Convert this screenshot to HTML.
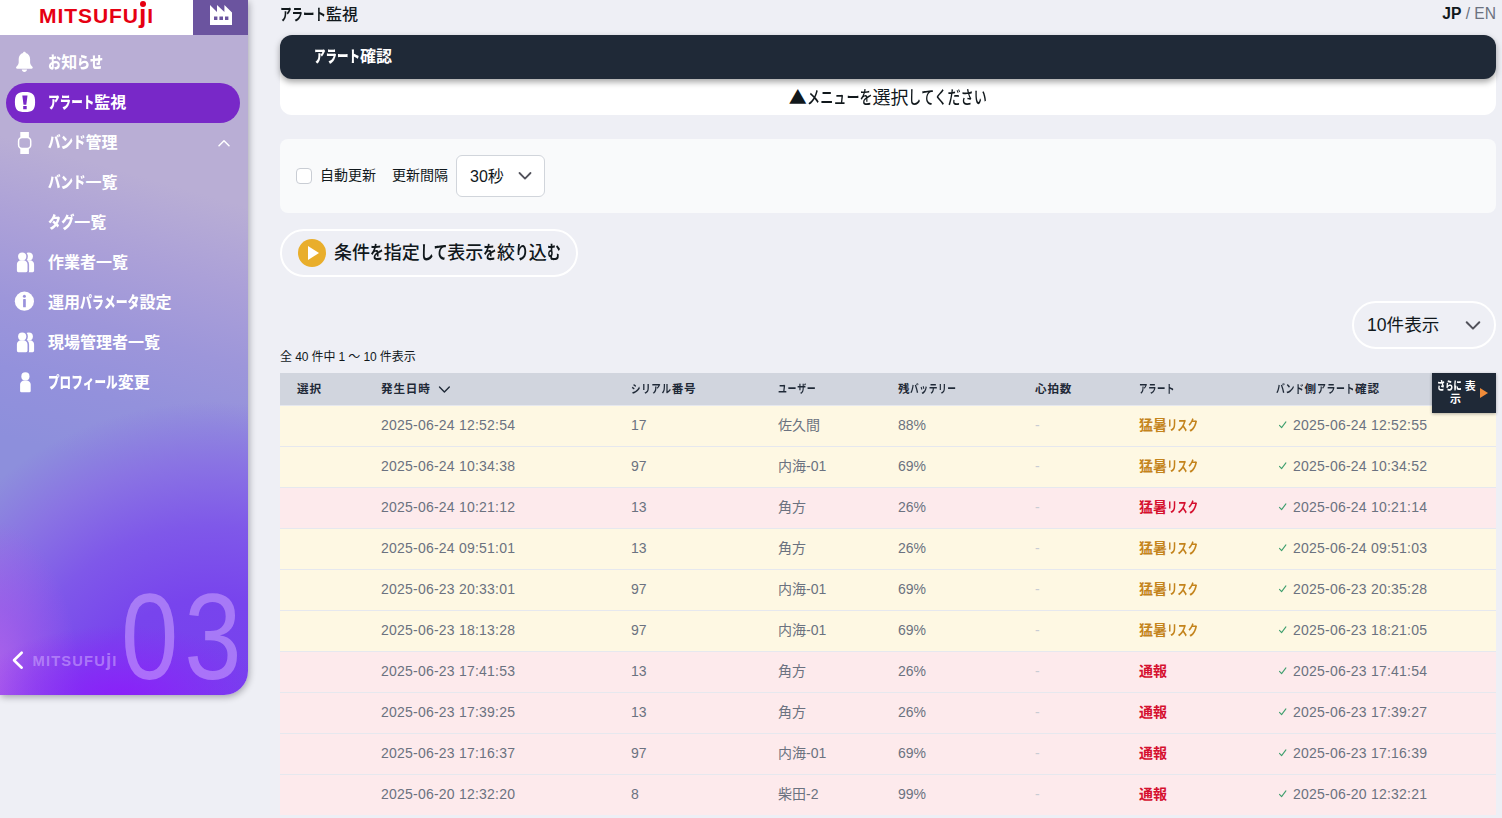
<!DOCTYPE html>
<html lang="ja">
<head>
<meta charset="utf-8">
<title>アラート監視</title>
<style>
*{box-sizing:border-box;margin:0;padding:0}
html,body{width:1502px;height:818px;overflow:hidden}
body{background:#eeeff5;font-family:"Liberation Sans","Noto Sans CJK JP",sans-serif;color:#11181c;position:relative}
.abs{position:absolute}
.k{display:inline-block;transform-origin:0 50%;white-space:nowrap;font-weight:500}
.nav .k,#darkbar .k,#more .k{font-weight:900}
.th .k,.c6 .k{font-weight:700}
#cond .k,#title .k{font-weight:700}
body{font-kerning:none;font-feature-settings:"kern" 0,"palt" 0,"chws" 0;text-spacing-trim:space-all}

/* ---------- sidebar ---------- */
#side{position:absolute;left:0;top:0;width:248px;height:695px;border-bottom-right-radius:24px;overflow:hidden;
  background:
   radial-gradient(ellipse 150px 75px at 120px 700px, rgba(140,28,250,.95) 0%, rgba(138,35,248,.6) 45%, rgba(135,40,245,0) 100%),
   radial-gradient(ellipse 90px 170px at -10px 690px, rgba(180,100,235,.95) 0%, rgba(170,90,235,.55) 50%, rgba(160,90,235,0) 100%),
   radial-gradient(circle 328px at 210px 730px, #7640ee 0%, #7844ed 40%, #7f58e9 62%, #8a74e3 82%, rgba(141,140,221,0) 100%),
   linear-gradient(196deg,#b9aed5 0%,#b9aed5 27%,#aba0d8 38%,#9d96da 48%,#9391dc 57%,#8d8fdc 66%,#8d8fdc 100%);
  box-shadow:none}
#sideshadow{position:absolute;left:0;top:0;width:248px;height:695px;border-bottom-right-radius:24px;box-shadow:1px 2px 7px rgba(0,0,20,.32)}
#logo{position:absolute;left:0;top:0;width:193px;height:35px;background:#fff}
#logo>span{position:absolute;left:39px;top:1.800px;font-weight:bold;font-size:21px;line-height:28px;color:#e60012;letter-spacing:.95px;white-space:nowrap}
.lj{font-size:1.270em;line-height:0}
#logo i{position:absolute;left:139.900px;top:.9px;width:6.200px;height:6.200px;border-radius:50%;background:#e60012}
#fact{position:absolute;left:193px;top:0;width:55px;height:35px;background:#6b549f}
.nav{position:absolute;left:0;width:248px;height:40px;color:#fff;font-weight:bold;font-size:16px;line-height:40px}
.nav .t{position:absolute;left:48px;top:1px;white-space:nowrap;transform-origin:0 50%}
.ic{position:absolute;display:block}
#pill{position:absolute;left:6px;top:83px;width:234px;height:40px;border-radius:20px;background:#7828c8}
#big{position:absolute;left:120.500px;top:576.200px;font-size:122.700px;line-height:122.700px;color:rgba(205,165,255,.55);font-family:"Liberation Sans",sans-serif;letter-spacing:7.100px;white-space:nowrap;transform-origin:0 0;transform:scaleX(.839)}
#blogo{position:absolute;left:32.600px;top:652px;font-size:14.700px;line-height:18px;font-weight:bold;color:rgba(200,160,252,.62);letter-spacing:1.150px;white-space:nowrap}

/* ---------- main ---------- */
#title{position:absolute;left:280px;top:4px;font-weight:500;font-size:16px;line-height:22px;color:#11181c;white-space:nowrap}
#lang{position:absolute;right:6px;top:3px;font-size:15.600px;line-height:22px;color:#6b7280;white-space:nowrap}
#lang b{color:#11181c}
#whitebox{position:absolute;left:280px;top:60px;width:1216px;height:55px;background:#fff;border-radius:0 0 12px 12px}
#darkbar{position:absolute;left:280px;top:35px;width:1216px;height:44px;background:#1f2937;border-radius:12px;box-shadow:0 3px 6px rgba(0,0,0,.36)}
#darkbar>span{position:absolute;left:34px;top:11px;font-size:16px;line-height:22px;font-weight:bold;color:#fff;white-space:nowrap}
#menumsg{position:absolute;left:280px;width:1216px;top:84px;text-align:center;font-family:"Noto Sans CJK JP",sans-serif;font-size:18px;line-height:24px;color:#11181c;white-space:nowrap}
#filter{position:absolute;left:280px;top:139px;width:1216px;height:74px;background:#f9fafb;border-radius:8px}
#cb{position:absolute;left:296px;top:168px;width:16px;height:16px;border:1px solid #c9cdd4;border-radius:4px;background:#fff}
.lbl{position:absolute;font-size:14px;line-height:20px;color:#11181c;white-space:nowrap}
#sel30{position:absolute;left:456px;top:155px;width:89px;height:42px;border:1px solid #d1d5db;border-radius:6px;background:#fff}
#sel30>span{position:absolute;left:13px;top:10px;font-size:16px;line-height:22px;color:#11181c;white-space:nowrap}
#cond{position:absolute;left:280px;top:229px;width:298px;height:48px;border:2px solid #fff;border-radius:24px;background:#eeeff5}
#cond .c{position:absolute;left:16px;top:8px;width:28px;height:28px;border-radius:50%;background:#e9ae2b}
#cond .c:after{content:"";position:absolute;left:10px;top:7px;border-left:11px solid #fff;border-top:7px solid transparent;border-bottom:7px solid transparent}
#cond>span{position:absolute;left:52px;top:9px;font-size:18px;line-height:26px;color:#11181c;white-space:nowrap;font-weight:500}
#sel10{position:absolute;left:1352px;top:301px;width:144px;height:48px;border:2px solid #fff;border-radius:24px;background:#eeeff5}
#sel10>span{position:absolute;left:13px;top:9px;font-size:17.600px;line-height:26px;color:#11181c;white-space:nowrap}
#count{position:absolute;left:280px;top:348px;letter-spacing:-.1px;font-size:12px;line-height:18px;color:#11181c;white-space:nowrap}

/* ---------- table ---------- */
#thead{position:absolute;left:280px;top:373px;width:1216px;height:32px;background:#d1d5de}
.th{position:absolute;top:373px;letter-spacing:.8px;font-size:11.600px;line-height:32px;font-weight:bold;color:#1f2937;white-space:nowrap}
.row{position:absolute;left:280px;width:1216px;height:41px;border-top:1px solid #e6e8ee;font-size:14px;line-height:38px;color:#6b7280}
.row.y{background:#fef8e3}
.row.p{background:#fdeaec}
.row>span{position:absolute;top:0;white-space:nowrap}
.c1{left:101px;letter-spacing:.22px}.c2{left:351px}.c3{left:498px}.c4{left:618px}.c5{left:755px;color:#c9ccd3}.c6{left:859px;font-weight:bold}.c7{left:1013px;letter-spacing:.22px}
.row svg{position:absolute;left:998px;top:14px;display:block}
.row.y .c6{color:#c4841d}
.row.p .c6{color:#d5102f}
.row .o{color:#c4841d}
#more .m1{position:absolute;left:5px;top:6px;white-space:nowrap}#more .m2{position:absolute;left:18px;top:19px}#more i{position:absolute;left:48px;top:15px;border-left:8px solid #f08c3a;border-top:5.500px solid transparent;border-bottom:5.500px solid transparent}
#more{position:absolute;left:1432px;top:373px;width:64px;height:40px;background:#1f2937;box-shadow:0 1px 3px rgba(0,0,0,.3);color:#fff;font-size:11px;line-height:14px;font-weight:bold;text-align:center}
</style>
</head>
<body>

<!-- sidebar -->
<div id="sideshadow"></div>
<div id="side">
  <div id="pill"></div>
  <div id="big">03</div>
  <div id="blogo">MITSUFU<span class="lj">j</span>I</div>
</div>
<div id="logo"><span>MITSUFU<span class="lj">ȷ</span>I</span><i></i></div>
<div id="fact"></div>

<div class="nav" style="top:42px"><span class="t"><span class="k" style="transform:scaleX(0.819);margin-right:-2.90px">お</span>知<span class="k" style="transform:scaleX(0.819);margin-right:-5.80px">らせ</span></span></div>
<div class="nav" style="top:82px"><span class="t"><span class="k" style="transform:scaleX(0.723);margin-right:-17.70px">アラート</span>監視</span></div>
<div class="nav" style="top:122px"><span class="t"><span class="k" style="transform:scaleX(0.781);margin-right:-10.50px">バンド</span>管理</span></div>
<div class="nav" style="top:162px"><span class="t"><span class="k" style="transform:scaleX(0.781);margin-right:-10.50px">バンド</span>一覧</span></div>
<div class="nav" style="top:202px"><span class="t"><span class="k" style="transform:scaleX(0.822);margin-right:-5.70px">タグ</span>一覧</span></div>
<div class="nav" style="top:242px"><span class="t">作業者一覧</span></div>
<div class="nav" style="top:282px"><span class="t">運用<span class="k" style="transform:scaleX(0.743);margin-right:-20.60px">パラメータ</span>設定</span></div>
<div class="nav" style="top:322px"><span class="t">現場管理者一覧</span></div>
<div class="nav" style="top:362px"><span class="t"><span class="k" style="transform:scaleX(0.725);margin-right:-26.40px">プロフィール</span>変更</span></div>


<!-- icons -->
<svg class="ic" style="left:210px;top:5px" width="22" height="20" viewBox="0 0 22 20"><path fill="#fff" fill-rule="evenodd" d="M0 0L7 7V0l7.4 7V0L22 7.6V20H0zM4 11.4h3.4v3.6H4zm5.4 0h3.6v3.6H9.4zm5.6 0h3.4v3.6H15z"/></svg>
<svg class="ic" style="left:15px;top:51px" width="19" height="22" viewBox="0 0 19 22"><path fill="#fff" d="M9.4.7c.8 0 1.3.5 1.4 1.3 2.6.8 4.3 3 4.300 6v3.500c0 1.500 1 2.800 2.300 4.200.8.900.3 2-.9 2H2.300c-1.200 0-1.700-1.100-.9-2 1.300-1.400 2.300-2.700 2.300-4.200V8c0-3 1.700-5.200 4.300-6 .1-.8.600-1.300 1.400-1.300zM6.700 18.600h5.400c-.3 1.400-1.300 2.300-2.700 2.300s-2.400-.9-2.700-2.300z"/></svg>
<svg class="ic" style="left:14px;top:91px" width="22" height="22" viewBox="0 0 22 22"><path fill="#fff" d="M11 .9C18.700 .9 21.100 3.300 21.100 11S18.700 21.100 11 21.100 .9 18.700 .9 11 3.300 .9 11 .9z"/><path fill="#7828c8" d="M8.300 4.400h5.200l-1.200 9.400H9.500zM9.200 15h3.500v3.200H9.200z"/></svg>
<svg class="ic" style="left:17px;top:131px" width="16" height="24" viewBox="0 0 16 24"><path fill="#fff" d="M3.300 1h8.600v5.600H3.300zM3.300 17.400h8.600V23H3.300z"/><rect x="1.600" y="6.600" width="12.100" height="10.900" rx="3.500" fill="none" stroke="#fff" stroke-width="1.500"/></svg>
<svg class="ic" style="left:218px;top:139px" width="12" height="8" viewBox="0 0 12 8"><path d="M1 6.700L6 1.700l5 5" fill="none" stroke="#fff" stroke-width="1.500" stroke-linecap="round" stroke-linejoin="round"/></svg>
<svg class="ic" style="left:16px;top:252px" width="20" height="22" viewBox="0 0 20 22"><defs><mask id="mu1" maskUnits="userSpaceOnUse" x="0" y="0" width="20" height="22"><rect width="20" height="22" fill="#fff"/><g transform="translate(.9 .2)" fill="#000" stroke="#000" stroke-width="3.2"><circle cx="5.3" cy="4.3" r="4.1"/><path d="M0 12.3a4.2 4.2 0 0 1 4.2-4.2h2.2a4.2 4.2 0 0 1 4.2 4.2v6.3a1.4 1.4 0 0 1-1.4 1.4h-7.8a1.4 1.4 0 0 1-1.4-1.4z"/></g></mask></defs><g fill="#fff"><g mask="url(#mu1)"><g transform="translate(7.5 .2)"><circle cx="5.3" cy="4.3" r="4.1"/><path d="M0 12.3a4.2 4.2 0 0 1 4.2-4.2h2.2a4.2 4.2 0 0 1 4.2 4.2v6.3a1.4 1.4 0 0 1-1.4 1.4h-7.8a1.4 1.4 0 0 1-1.4-1.4z"/></g></g><g transform="translate(.9 .2)"><circle cx="5.3" cy="4.3" r="4.1"/><path d="M0 12.3a4.2 4.2 0 0 1 4.2-4.2h2.2a4.2 4.2 0 0 1 4.2 4.2v6.3a1.4 1.4 0 0 1-1.4 1.4h-7.8a1.4 1.4 0 0 1-1.4-1.4z"/></g></g></svg>
<svg class="ic" style="left:14px;top:291px" width="21" height="21" viewBox="0 0 21 21"><circle cx="10.400" cy="10.200" r="9.600" fill="#fff"/><circle cx="10.400" cy="5.300" r="1.500" fill="#9a92dc"/><rect x="9.100" y="8" width="2.700" height="8.300" rx=".4" fill="#9a92dc"/></svg>
<svg class="ic" style="left:16px;top:332px" width="20" height="22" viewBox="0 0 20 22"><defs><mask id="mu2" maskUnits="userSpaceOnUse" x="0" y="0" width="20" height="22"><rect width="20" height="22" fill="#fff"/><g transform="translate(.9 .2)" fill="#000" stroke="#000" stroke-width="3.2"><circle cx="5.3" cy="4.3" r="4.1"/><path d="M0 12.3a4.2 4.2 0 0 1 4.2-4.2h2.2a4.2 4.2 0 0 1 4.2 4.2v6.3a1.4 1.4 0 0 1-1.4 1.4h-7.8a1.4 1.4 0 0 1-1.4-1.4z"/></g></mask></defs><g fill="#fff"><g mask="url(#mu2)"><g transform="translate(7.5 .2)"><circle cx="5.3" cy="4.3" r="4.1"/><path d="M0 12.3a4.2 4.2 0 0 1 4.2-4.2h2.2a4.2 4.2 0 0 1 4.2 4.2v6.3a1.4 1.4 0 0 1-1.4 1.4h-7.8a1.4 1.4 0 0 1-1.4-1.4z"/></g></g><g transform="translate(.9 .2)"><circle cx="5.3" cy="4.3" r="4.1"/><path d="M0 12.3a4.2 4.2 0 0 1 4.2-4.2h2.2a4.2 4.2 0 0 1 4.2 4.2v6.3a1.4 1.4 0 0 1-1.4 1.4h-7.8a1.4 1.4 0 0 1-1.4-1.4z"/></g></g></svg>
<svg class="ic" style="left:20px;top:372px" width="12" height="21" viewBox="0 0 12 21"><g fill="#fff"><circle cx="5.400" cy="4.400" r="4.100"/><path d="M0 12.3a4.2 4.2 0 0 1 4.2-4.2h2.2a4.2 4.2 0 0 1 4.2 4.2v6.3a1.4 1.4 0 0 1-1.4 1.4h-7.8a1.4 1.4 0 0 1-1.4-1.4z" transform="translate(.1 .3)"/></g></svg>
<svg class="ic" style="left:11px;top:650px" width="14" height="20" viewBox="0 0 14 20"><path d="M10.700 2.700L3 10.200l7.700 7.500" fill="none" stroke="#fff" stroke-width="2.600" stroke-linecap="round" stroke-linejoin="round"/></svg>

<!-- main header -->
<div id="title"><span class="k" style="transform:scaleX(0.719);margin-right:-18.00px">アラート</span>監視</div>
<div id="lang"><b>JP</b> / EN</div>
<div id="whitebox"></div>
<div id="darkbar"><span><span class="k" style="transform:scaleX(0.719);margin-right:-18.00px">アラート</span>確認</span></div>
<div id="menumsg">▲<span class="k" style="transform:scaleX(0.730);margin-right:-24.32px">メニューを</span>選択<span class="k" style="transform:scaleX(0.730);margin-right:-29.18px">してください</span></div>

<div id="filter"></div>
<div id="cb"></div>
<div class="lbl" style="left:320px;top:165px">自動更新</div>
<div class="lbl" style="left:392px;top:165px">更新間隔</div>
<div id="sel30"><span>30秒</span></div>

<div id="cond"><div class="c"></div><span>条件<span class="k" style="transform:scaleX(0.764);margin-right:-4.25px">を</span>指定<span class="k" style="transform:scaleX(0.764);margin-right:-8.50px">して</span>表示<span class="k" style="transform:scaleX(0.764);margin-right:-4.25px">を</span>絞<span class="k" style="transform:scaleX(0.764);margin-right:-4.25px">り</span>込<span class="k" style="transform:scaleX(0.764);margin-right:-4.25px">む</span></span></div>
<div id="sel10"><span>10件表示</span></div>
<div id="count">全 40 件中 1 ～ 10 件表示</div>


<svg class="ic" style="left:518px;top:171px" width="14" height="10" viewBox="0 0 14 10"><path d="M1.500 2L7 7.600 12.500 2" fill="none" stroke="#52525b" stroke-width="1.800" stroke-linecap="round" stroke-linejoin="round"/></svg>
<svg class="ic" style="left:1465px;top:320px" width="16" height="11" viewBox="0 0 16 11"><path d="M1.700 2.200L8 8.600l6.300-6.400" fill="none" stroke="#52525b" stroke-width="2" stroke-linecap="round" stroke-linejoin="round"/></svg>

<!-- table -->
<div id="thead"></div>
<svg class="ic" style="left:438px;top:385px" width="13" height="9" viewBox="0 0 13 9"><path d="M1.500 2L6.400 6.900 11.300 2" fill="none" stroke="#1f2937" stroke-width="1.400" stroke-linecap="round" stroke-linejoin="round"/></svg>
<div class="th" style="left:297px">選択</div>
<div class="th" style="left:381px">発生日時</div>
<div class="th" style="left:631px"><span class="k" style="transform:scaleX(0.821);margin-right:-8.90px">シリアル</span>番号</div>
<div class="th" style="left:778px"><span class="k" style="transform:scaleX(0.772);margin-right:-11.30px">ユーザー</span></div>
<div class="th" style="left:898px">残<span class="k" style="transform:scaleX(0.752);margin-right:-15.40px">バッテリー</span></div>
<div class="th" style="left:1035px">心拍数</div>
<div class="th" style="left:1139px"><span class="k" style="transform:scaleX(0.726);margin-right:-13.60px">アラート</span></div>
<div class="th" style="left:1276px"><span class="k" style="transform:scaleX(0.767);margin-right:-8.66px">バンド</span>側<span class="k" style="transform:scaleX(0.767);margin-right:-11.54px">アラート</span>確認</div>

<div class="row y" style="top:405px"><span class="c1">2025-06-24 12:52:54</span><span class="c2">17</span><span class="c3">佐久間</span><span class="c4">88%</span><span class="c5">-</span><span class="c6">猛暑<span class="k" style="transform:scaleX(0.738);margin-right:-11.00px">リスク</span></span><svg width="10" height="10" viewBox="0 0 10 10"><path d="M1.500 5.400L3.600 7.700 7.900 1.900" fill="none" stroke="#3f9f6e" stroke-width="1.100" stroke-linecap="round" stroke-linejoin="round"/></svg><span class="c7">2025-06-24 12:52:55</span></div>
<div class="row y" style="top:446px"><span class="c1">2025-06-24 10:34:38</span><span class="c2">97</span><span class="c3">内海-01</span><span class="c4">69%</span><span class="c5">-</span><span class="c6">猛暑<span class="k" style="transform:scaleX(0.738);margin-right:-11.00px">リスク</span></span><svg width="10" height="10" viewBox="0 0 10 10"><path d="M1.500 5.400L3.600 7.700 7.900 1.900" fill="none" stroke="#3f9f6e" stroke-width="1.100" stroke-linecap="round" stroke-linejoin="round"/></svg><span class="c7">2025-06-24 10:34:52</span></div>
<div class="row p" style="top:487px"><span class="c1">2025-06-24 10:21:12</span><span class="c2">13</span><span class="c3">角方</span><span class="c4">26%</span><span class="c5">-</span><span class="c6">猛暑<span class="k" style="transform:scaleX(0.738);margin-right:-11.00px">リスク</span></span><svg width="10" height="10" viewBox="0 0 10 10"><path d="M1.500 5.400L3.600 7.700 7.900 1.900" fill="none" stroke="#3f9f6e" stroke-width="1.100" stroke-linecap="round" stroke-linejoin="round"/></svg><span class="c7">2025-06-24 10:21:14</span></div>
<div class="row y" style="top:528px"><span class="c1">2025-06-24 09:51:01</span><span class="c2">13</span><span class="c3">角方</span><span class="c4">26%</span><span class="c5">-</span><span class="c6">猛暑<span class="k" style="transform:scaleX(0.738);margin-right:-11.00px">リスク</span></span><svg width="10" height="10" viewBox="0 0 10 10"><path d="M1.500 5.400L3.600 7.700 7.900 1.900" fill="none" stroke="#3f9f6e" stroke-width="1.100" stroke-linecap="round" stroke-linejoin="round"/></svg><span class="c7">2025-06-24 09:51:03</span></div>
<div class="row y" style="top:569px"><span class="c1">2025-06-23 20:33:01</span><span class="c2">97</span><span class="c3">内海-01</span><span class="c4">69%</span><span class="c5">-</span><span class="c6">猛暑<span class="k" style="transform:scaleX(0.738);margin-right:-11.00px">リスク</span></span><svg width="10" height="10" viewBox="0 0 10 10"><path d="M1.500 5.400L3.600 7.700 7.900 1.900" fill="none" stroke="#3f9f6e" stroke-width="1.100" stroke-linecap="round" stroke-linejoin="round"/></svg><span class="c7">2025-06-23 20:35:28</span></div>
<div class="row y" style="top:610px"><span class="c1">2025-06-23 18:13:28</span><span class="c2">97</span><span class="c3">内海-01</span><span class="c4">69%</span><span class="c5">-</span><span class="c6">猛暑<span class="k" style="transform:scaleX(0.738);margin-right:-11.00px">リスク</span></span><svg width="10" height="10" viewBox="0 0 10 10"><path d="M1.500 5.400L3.600 7.700 7.900 1.900" fill="none" stroke="#3f9f6e" stroke-width="1.100" stroke-linecap="round" stroke-linejoin="round"/></svg><span class="c7">2025-06-23 18:21:05</span></div>
<div class="row p" style="top:651px"><span class="c1">2025-06-23 17:41:53</span><span class="c2">13</span><span class="c3">角方</span><span class="c4">26%</span><span class="c5">-</span><span class="c6">通報</span><svg width="10" height="10" viewBox="0 0 10 10"><path d="M1.500 5.400L3.600 7.700 7.900 1.900" fill="none" stroke="#3f9f6e" stroke-width="1.100" stroke-linecap="round" stroke-linejoin="round"/></svg><span class="c7">2025-06-23 17:41:54</span></div>
<div class="row p" style="top:692px"><span class="c1">2025-06-23 17:39:25</span><span class="c2">13</span><span class="c3">角方</span><span class="c4">26%</span><span class="c5">-</span><span class="c6">通報</span><svg width="10" height="10" viewBox="0 0 10 10"><path d="M1.500 5.400L3.600 7.700 7.900 1.900" fill="none" stroke="#3f9f6e" stroke-width="1.100" stroke-linecap="round" stroke-linejoin="round"/></svg><span class="c7">2025-06-23 17:39:27</span></div>
<div class="row p" style="top:733px"><span class="c1">2025-06-23 17:16:37</span><span class="c2">97</span><span class="c3">内海-01</span><span class="c4">69%</span><span class="c5">-</span><span class="c6">通報</span><svg width="10" height="10" viewBox="0 0 10 10"><path d="M1.500 5.400L3.600 7.700 7.900 1.900" fill="none" stroke="#3f9f6e" stroke-width="1.100" stroke-linecap="round" stroke-linejoin="round"/></svg><span class="c7">2025-06-23 17:16:39</span></div>
<div class="row p" style="top:774px"><span class="c1">2025-06-20 12:32:20</span><span class="c2">8</span><span class="c3">柴田-2</span><span class="c4">99%</span><span class="c5">-</span><span class="c6">通報</span><svg width="10" height="10" viewBox="0 0 10 10"><path d="M1.500 5.400L3.600 7.700 7.900 1.900" fill="none" stroke="#3f9f6e" stroke-width="1.100" stroke-linecap="round" stroke-linejoin="round"/></svg><span class="c7">2025-06-20 12:32:21</span></div>

<div id="more"><span class="m1"><span class="k" style="transform:scaleX(0.745);margin-right:-8.40px">さらに</span> 表</span><span class="m2">示</span><i></i></div>

</body>
</html>
